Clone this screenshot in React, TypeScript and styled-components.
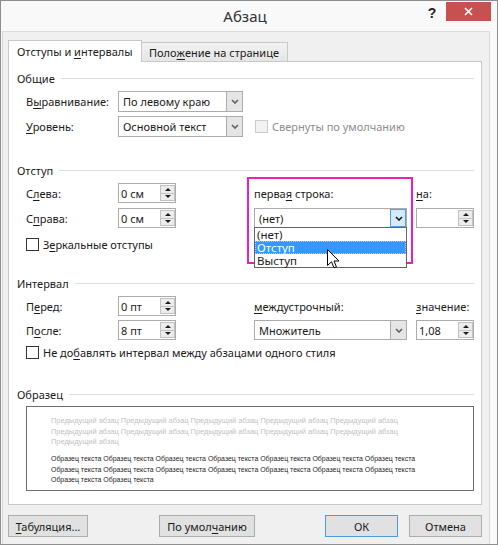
import React from "react";
import styled, { createGlobalStyle } from "styled-components";

const GlobalStyle = createGlobalStyle`
  html, body {
    margin: 0;
    padding: 0;
    background: #ffffff;
  }
  body {
    font-family: "Noto Sans", "Liberation Sans", sans-serif;
    font-size: 11px;
    color: #1a1a1a;
  }
  * {
    box-sizing: border-box;
  }
`;

const Window = styled.div`
  width: 498px;
  height: 545px;
  display: flex;
  flex-direction: column;
  background: #f9f9f9;
  border: 1px solid #8e8e8e;
`;

const TitleBar = styled.div`
  height: 30px;
  display: flex;
  align-items: flex-start;
  flex-shrink: 0;
`;

const Title = styled.div`
  flex: 1;
  padding-left: 65px;
  text-align: center;
  line-height: 30px;
  font-size: 15px;
  color: #333333;
`;

const HelpButton = styled.div`
  width: 16px;
  margin-top: 4px;
  text-align: center;
  font-family: "Liberation Sans", sans-serif;
  font-weight: bold;
  font-size: 14px;
  color: #222222;
`;

const CloseButton = styled.div`
  width: 45px;
  height: 19px;
  margin: 1px 6px 0 6px;
  background: #c75050;
  display: flex;
  align-items: center;
  justify-content: center;
`;

const Client = styled.div`
  flex: 1;
  margin: 0 7px 0 1px;
  padding: 8px 7px 7px 5px;
  background: #f0f0f0;
  border: 1px solid #dadada;
  border-bottom: none;
  display: flex;
  flex-direction: column;
`;

const TabRow = styled.div`
  height: 21px;
  display: flex;
  align-items: flex-end;
  flex-shrink: 0;
`;

const Tab = styled.div<{ $active?: boolean }>`
  position: relative;
  z-index: ${(p) => (p.$active ? 2 : 1)};
  height: ${(p) => (p.$active ? 22 : 19)}px;
  margin-bottom: ${(p) => (p.$active ? -1 : 0)}px;
  margin-left: ${(p) => (p.$active ? 0 : -1)}px;
  width: ${(p) => (p.$active ? 134 : 147)}px;
  padding-left: ${(p) => (p.$active ? 8 : 7)}px;
  display: flex;
  align-items: center;
  white-space: pre;
  background: ${(p) =>
    p.$active ? "#ffffff" : "linear-gradient(#f2f2f2, #e6e6e6)"};
  border: 1px solid #c9c9c9;
  border-bottom: none;
`;

const Panel = styled.div`
  flex: 1;
  background: #ffffff;
  border: 1px solid #c9c9c9;
  padding: 8px 7px 0 8px;
  display: flex;
  flex-direction: column;
`;

const Group = styled.div<{ $mt?: number }>`
  position: relative;
  margin-top: ${(p) => p.$mt ?? 0}px;
`;

const SectionHead = styled.div`
  display: flex;
  align-items: center;
  height: 16px;
  white-space: nowrap;

  &::after {
    content: "";
    flex: 1;
    border-top: 1px solid #dddddd;
    margin-left: 6px;
  }
`;

const FormGrid = styled.div<{ $row: number; $gap: number }>`
  display: grid;
  grid-template-columns: 92px 136px 162px 1fr;
  grid-auto-rows: ${(p) => p.$row}px;
  row-gap: ${(p) => p.$gap}px;
  align-items: center;
  margin: 5px 0 0 9px;
`;

const Label = styled.span`
  white-space: pre;
`;

const Key = styled.span`
  text-decoration: underline;
  text-underline-offset: 2px;
`;

const SelectWrap = styled.div`
  position: relative;
  height: 100%;
`;

const SelectBox = styled.div<{ $w: number }>`
  width: ${(p) => p.$w}px;
  height: 100%;
  display: flex;
  background: #ffffff;
  border: 1px solid #acacac;
`;

const SelectValue = styled.div`
  flex: 1;
  padding-left: 4px;
  display: flex;
  align-items: center;
  white-space: nowrap;
`;

const SelectArrow = styled.div<{ $active?: boolean }>`
  width: 16px;
  display: flex;
  align-items: center;
  justify-content: center;
  background: ${(p) => (p.$active ? "#d6eafc" : "#e5e5e5")};
  border-left: 1px solid ${(p) => (p.$active ? "#569de5" : "#acacac")};
  outline: ${(p) => (p.$active ? "1px solid #569de5" : "none")};
  outline-offset: -1px;
  color: ${(p) => (p.$active ? "#1a1a1a" : "#606060")};
`;

const DropList = styled.ul`
  position: absolute;
  top: calc(100% - 1px);
  left: 0;
  width: 153px;
  margin: 0;
  padding: 0;
  list-style: none;
  background: #ffffff;
  border: 1px solid #646464;
  z-index: 3;
`;

const DropItem = styled.li<{ $selected?: boolean }>`
  height: 13px;
  line-height: 13px;
  padding-left: 2px;
  font-size: 11.5px;
  background: ${(p) => (p.$selected ? "#3399ff" : "transparent")};
  color: ${(p) => (p.$selected ? "#ffffff" : "#1a1a1a")};
  outline: ${(p) => (p.$selected ? "1px dotted #f0c070" : "none")};
  outline-offset: -1px;
`;

const SpinBox = styled.div`
  width: 58px;
  height: 100%;
  display: flex;
  background: #ffffff;
  border: 1px solid #acacac;
`;

const SpinValue = styled.div`
  flex: 1;
  padding-left: 2px;
  display: flex;
  align-items: center;
  white-space: nowrap;
`;

const SpinArrows = styled.div`
  width: 15px;
  padding: 1px 0;
  display: flex;
  flex-direction: column;
`;

const SpinBtn = styled.div<{ $dir: "up" | "down" }>`
  flex: 1;
  display: flex;
  align-items: center;
  justify-content: center;
  background: #ececec;
  border: 1px solid #c2c2c2;
  margin-top: ${(p) => (p.$dir === "down" ? -1 : 0)}px;

  &::after {
    content: "";
    border-left: 3px solid transparent;
    border-right: 3px solid transparent;
    ${(p) =>
      p.$dir === "up"
        ? "border-bottom: 3px solid #1a1a1a;"
        : "border-top: 3px solid #1a1a1a;"}
  }
`;

const CheckRow = styled.label<{ $mt: number; $col?: number }>`
  display: flex;
  align-items: center;
  gap: 4px;
  height: 13px;
  margin-top: ${(p) => p.$mt}px;
  padding-left: ${(p) => (p.$col ? 1 : 9)}px;
  grid-column: ${(p) => p.$col ?? "auto"};
  white-space: pre;
`;

const Box = styled.span<{ $disabled?: boolean }>`
  width: 13px;
  height: 13px;
  flex-shrink: 0;
  background: ${(p) => (p.$disabled ? "#f2f2f2" : "#ffffff")};
  border: 1px solid ${(p) => (p.$disabled ? "#cccccc" : "#333333")};
`;

const CheckText = styled.span<{ $disabled?: boolean }>`
  color: ${(p) => (p.$disabled ? "#8d8d8d" : "#1a1a1a")};
`;

const Highlight = styled.div`
  position: absolute;
  left: 230px;
  top: 15px;
  width: 166px;
  height: 87px;
  border: 2px solid #ee1dbc;
  pointer-events: none;
`;

const Cursor = styled.svg`
  position: absolute;
  left: 310px;
  top: 87px;
  z-index: 4;
`;

const Preview = styled.div`
  margin: 4px 0 0 9px;
  height: 85px;
  border: 1px solid #6d6d6d;
  padding: 9px 0 0 24px;
  font-family: "Liberation Sans", sans-serif;
`;

const PreviewBlock = styled.div<{ $muted?: boolean }>`
  color: ${(p) => (p.$muted ? "#c2c2c2" : "#1e1e1e")};
  font-size: ${(p) => (p.$muted ? 7.45 : 6.95)}px;
  margin-top: ${(p) => (p.$muted ? 0 : 6)}px;
`;

const PreviewLine = styled.div`
  height: 10.7px;
  line-height: 10.7px;
  white-space: nowrap;
`;

const ButtonRow = styled.div`
  height: 22px;
  margin-top: 10px;
  display: flex;
  flex-shrink: 0;
`;

const Button = styled.button<{ $w: number; $primary?: boolean; $ml?: number | "auto" }>`
  width: ${(p) => p.$w}px;
  height: 22px;
  margin-left: ${(p) => (p.$ml === "auto" ? "auto" : `${p.$ml ?? 0}px`)};
  padding: 0;
  font-family: inherit;
  font-size: 11px;
  color: #1a1a1a;
  background: #e1e1e1;
  border: 1px solid ${(p) => (p.$primary ? "#4a9be0" : "#adadad")};
  white-space: pre;
`;

const Chevron: React.FC = () => (
  <svg width="8" height="5" viewBox="0 0 8 5">
    <path d="M1 1 L4 4 L7 1" fill="none" stroke="currentColor" strokeWidth="1.6" />
  </svg>
);

const Select: React.FC<{ value: string; width: number; active?: boolean; children?: React.ReactNode }> = ({
  value,
  width,
  active,
  children,
}) => (
  <SelectWrap>
    <SelectBox $w={width}>
      <SelectValue>{value}</SelectValue>
      <SelectArrow $active={active}>
        <Chevron />
      </SelectArrow>
    </SelectBox>
    {children}
  </SelectWrap>
);

const Spinner: React.FC<{ value?: string }> = ({ value }) => (
  <SpinBox>
    <SpinValue>{value}</SpinValue>
    <SpinArrows>
      <SpinBtn $dir="up" />
      <SpinBtn $dir="down" />
    </SpinArrows>
  </SpinBox>
);

const prevLine = Array(5).fill("Предыдущий абзац").join(" ");
const sampleLine = Array(7).fill("Образец текста").join(" ");

const App: React.FC = () => {
  return (
    <>
      <GlobalStyle />
      <Window>
        <TitleBar>
          <Title>Абзац</Title>
          <HelpButton>?</HelpButton>
          <CloseButton>
            <svg width="9" height="9" viewBox="0 0 9 9">
              <path d="M1 1 L8 8 M8 1 L1 8" stroke="#ffffff" strokeWidth="1.6" />
            </svg>
          </CloseButton>
        </TitleBar>

        <Client>
          <TabRow>
            <Tab $active>
              {"Отступы и "}<Key>и</Key>{"нтервалы"}
            </Tab>
            <Tab>
              Поло<Key>ж</Key>ение на странице
            </Tab>
          </TabRow>

          <Panel>
            <SectionHead>Общие</SectionHead>
            <FormGrid $row={21} $gap={4}>
              <Label>
                В<Key>ы</Key>равнивание:
              </Label>
              <Select value="По левому краю" width={125} />
              <span />
              <span />
              <Label>
                <Key>У</Key>ровень:
              </Label>
              <Select value="Основной текст" width={125} />
              <CheckRow $mt={0} $col={3}>
                <Box $disabled />
                <CheckText $disabled>Свернуты по умолчанию</CheckText>
              </CheckRow>
            </FormGrid>

            <Group $mt={25}>
              <SectionHead>Отступ</SectionHead>
              <FormGrid $row={20} $gap={5}>
                <Label>
                  С<Key>л</Key>ева:
                </Label>
                <Spinner value="0 см" />
                <Label>
                  {"перва"}<Key>я</Key>{" строка:"}
                </Label>
                <Label>
                  <Key>н</Key>а:
                </Label>
                <Label>
                  С<Key>п</Key>рава:
                </Label>
                <Spinner value="0 см" />
                <Select value="(нет)" width={153} active>
                  <DropList>
                    <DropItem>(нет)</DropItem>
                    <DropItem $selected>Отступ</DropItem>
                    <DropItem>Выступ</DropItem>
                  </DropList>
                </Select>
                <Spinner />
              </FormGrid>
              <CheckRow $mt={10}>
                <Box />
                <CheckText>
                  З<Key>е</Key>ркальные отступы
                </CheckText>
              </CheckRow>
              <Highlight />
              <Cursor width="13" height="20" viewBox="0 0 13 20">
                <path
                  d="M0.5 0.5 L0.5 16.5 L4.5 12.8 L7 18.8 L9.4 17.8 L7 12 L12 12 Z"
                  fill="#ffffff"
                  stroke="#000000"
                  strokeWidth="1"
                  strokeLinejoin="round"
                />
              </Cursor>
            </Group>

            <Group $mt={24}>
              <SectionHead>Интервал</SectionHead>
              <FormGrid $row={20} $gap={4}>
                <Label>
                  П<Key>е</Key>ред:
                </Label>
                <Spinner value="0 пт" />
                <Label>
                  <Key>м</Key>еждустрочный:
                </Label>
                <Label>
                  <Key>з</Key>начение:
                </Label>
                <Label>
                  П<Key>о</Key>сле:
                </Label>
                <Spinner value="8 пт" />
                <Select value="Множитель" width={153} />
                <Spinner value="1,08" />
              </FormGrid>
              <CheckRow $mt={6}>
                <Box />
                <CheckText>
                  {"Не до"}<Key>б</Key>{"авлять интервал между абзацами одного стиля"}
                </CheckText>
              </CheckRow>
            </Group>

            <Group $mt={27}>
              <SectionHead>Образец</SectionHead>
              <Preview>
                <PreviewBlock $muted>
                  <PreviewLine>{prevLine}</PreviewLine>
                  <PreviewLine>{prevLine}</PreviewLine>
                  <PreviewLine>Предыдущий абзац</PreviewLine>
                </PreviewBlock>
                <PreviewBlock>
                  <PreviewLine>{sampleLine}</PreviewLine>
                  <PreviewLine>{sampleLine}</PreviewLine>
                  <PreviewLine>Образец текста Образец текста</PreviewLine>
                </PreviewBlock>
              </Preview>
            </Group>
          </Panel>

          <ButtonRow>
            <Button $w={80}>
              <Key>Т</Key>абуляция...
            </Button>
            <Button $w={96} $ml={71}>
              По умол<Key>ч</Key>анию
            </Button>
            <Button $w={73} $ml="auto" $primary>
              ОК
            </Button>
            <Button $w={73} $ml={11}>
              Отмена
            </Button>
          </ButtonRow>
        </Client>
      </Window>
    </>
  );
};

export default App;
